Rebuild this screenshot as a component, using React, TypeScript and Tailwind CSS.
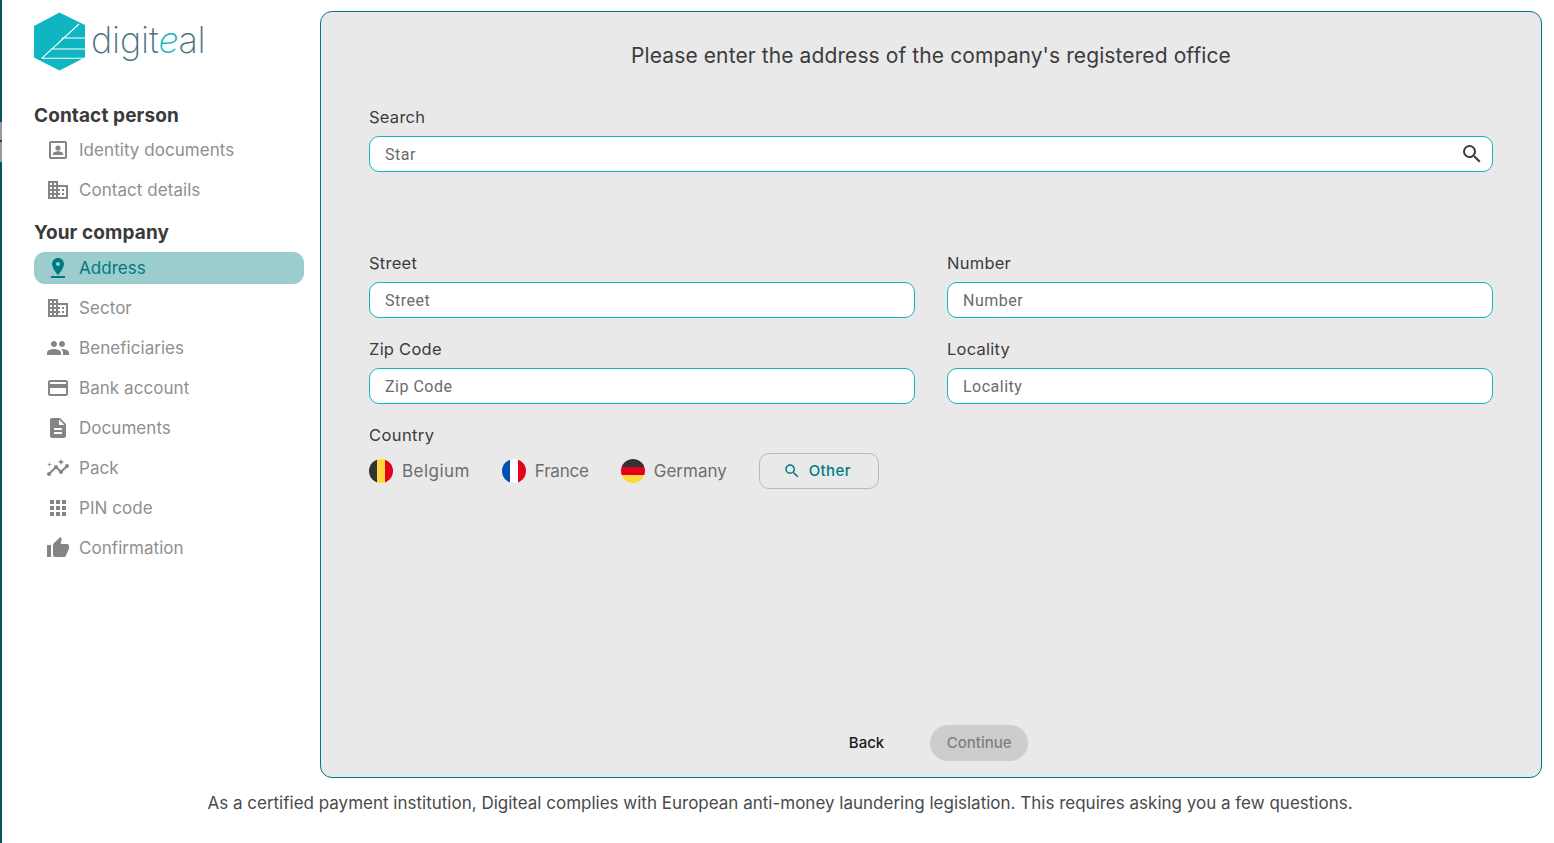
import { MdBusiness, MdPeople, MdCreditCard, MdDescription, MdInsights, MdApps, MdThumbUp, MdPinDrop, MdSearch } from "react-icons/md";

const sans = "font-['Inter','Noto_Sans',sans-serif]";

function Portrait() {
  return (
    <svg viewBox="0 0 24 24" width={24} height={24} fill="currentColor">
      <path d="M19 3H5c-1.11 0-2 .9-2 2v14c0 1.1.89 2 2 2h14c1.1 0 2-.9 2-2V5c0-1.1-.9-2-2-2zm0 16H5V5h14v14z" />
      <circle cx="12" cy="10" r="2.6" />
      <path d="M6.8 17v-.9c0-1.9 3.4-2.8 5.2-2.8s5.2.9 5.2 2.8v.9z" />
    </svg>
  );
}

function Logo() {
  return (
    <div className="flex items-center h-[60px]">
      <svg viewBox="0 0 51 59" width={51} height={59} className="shrink-0">
        <polygon points="25.5,0.5 51,13 51,45.5 25.5,58.5 0,45.5 0,14" fill="#10b5c2" />
        <path d="M7.7 46.3 L45 12 M27.7 26 H52 M16.7 37 H52 M7.7 46.3 H52" stroke="#fff" strokeWidth="1.1" fill="none" />
      </svg>
      <span className="ml-[6px] -mt-[2px] font-['Inter',sans-serif] text-[36px] font-extralight text-[#4e7482] leading-none tracking-[-0.2px]">
        digit<span className="text-[#10b5c2] italic">e</span>al
      </span>
    </div>
  );
}

function NavItem({ icon, label, active }: { icon: React.ReactNode; label: string; active?: boolean }) {
  return (
    <div className={`flex items-center h-8 mb-2 rounded-[11px] ${active ? "bg-[#9bcdcf] text-[#007a80]" : "text-[#8f8f8f]"}`}>
      <span className={`w-[45px] flex justify-center text-2xl pl-[3px] ${active ? "text-[#007a80]" : "text-[#858585]"}`}>{icon}</span>
      <span className="text-[17px] tracking-[0.05px] leading-none">{label}</span>
    </div>
  );
}

function Field({ label, placeholder, value }: { label: string; placeholder?: string; value?: string }) {
  return (
    <div className="flex-1 min-w-0">
      <div className="text-[16.5px] text-[#3c3c3c] leading-5 mb-[9px] tracking-[0.25px]">{label}</div>
      <div className="h-9 rounded-[10px] border border-[#10b5c2] bg-white flex items-center pl-[15px] pr-4 pt-[1px] font-['Roboto',sans-serif] text-base tracking-[0.5px] text-[#6b6b6b]">
        {value ?? placeholder}
      </div>
    </div>
  );
}

function Flag({ kind }: { kind: "be" | "fr" | "de" }) {
  const c = { be: ["#333333", "#ffd83d", "#e3001b"], fr: ["#0050b5", "#ffffff", "#e3001b"], de: ["#333333", "#e3001b", "#ffd83d"] }[kind];
  const vertical = kind !== "de";
  return (
    <div className={`w-6 h-6 rounded-full overflow-hidden flex shrink-0 ${vertical ? "flex-row" : "flex-col"}`}>
      {c.map((col, i) => (
        <div key={i} className="flex-1" style={{ background: col }} />
      ))}
    </div>
  );
}

function Country({ kind, label, track }: { kind: "be" | "fr" | "de"; label: string; track: string }) {
  return (
    <div className="flex items-center gap-[9px] mr-8">
      <Flag kind={kind} />
      <span className={`text-[17px] text-[#6e6e6e] leading-none ${track}`}>{label}</span>
    </div>
  );
}

export default function App() {
  return (
    <div className={`${sans} relative h-[843px] w-[1554px] overflow-hidden bg-white flex flex-col`}>
      <div className="flex">
        <div className="w-[2px] h-[778px] shrink-0 flex flex-col bg-[#00565b]">
          <div className="h-[122px]" />
          <div className="h-[18px] bg-[#9a9a9a]" />
          <div className="h-[2px]" />
          <div className="h-[20px] bg-[#9a9a9a]" />
        </div>
        <aside className="w-[318px] shrink-0 pl-8 pr-4">
          <div className="mt-[11px] mb-[33px]"><Logo /></div>
          <div className="text-[19px] font-bold text-[#3a3a3a] leading-6 mb-[6px] tracking-[0.1px]">Contact person</div>
          <NavItem icon={<Portrait />} label="Identity documents" />
          <NavItem icon={<MdBusiness />} label="Contact details" />
          <div className="text-[19px] font-bold text-[#3a3a3a] leading-6 mt-[15px] mb-[7px] tracking-[0.1px]">Your company</div>
          <NavItem active icon={<MdPinDrop />} label="Address" />
          <NavItem icon={<MdBusiness />} label="Sector" />
          <NavItem icon={<MdPeople />} label="Beneficiaries" />
          <NavItem icon={<MdCreditCard />} label="Bank account" />
          <NavItem icon={<MdDescription />} label="Documents" />
          <NavItem icon={<MdInsights />} label="Pack" />
          <NavItem icon={<MdApps />} label="PIN code" />
          <NavItem icon={<MdThumbUp />} label="Confirmation" />
        </aside>
        <div className="w-[1222px] shrink-0 pt-[11px]">
          <main className="h-[767px] rounded-[12px] border border-[#007a80] bg-[#e9e9e9] px-12 pt-[30px] flex flex-col">
            <h1 className="text-[21px] text-[#3c3c3c] text-center leading-7 font-normal tracking-[0.1px]">Please enter the address of the company's registered office</h1>
            <div className="mt-[37px] relative">
              <Field label="Search" value="Star" />
              <MdSearch className="absolute right-[9px] bottom-[6px] text-2xl text-[#3c3c3c]" />
            </div>
            <div className="mt-[81px] flex gap-8">
              <Field label="Street" placeholder="Street" />
              <Field label="Number" placeholder="Number" />
            </div>
            <div className="mt-[21px] flex gap-8">
              <Field label="Zip Code" placeholder="Zip Code" />
              <Field label="Locality" placeholder="Locality" />
            </div>
            <div className="mt-[21px] text-[16.5px] text-[#3c3c3c] leading-5 tracking-[0.4px]">Country</div>
            <div className="mt-[8px] flex items-center">
              <Country kind="be" label="Belgium" track="tracking-[0.45px]" />
              <Country kind="fr" label="France" track="tracking-[-0.2px]" />
              <Country kind="de" label="Germany" track="tracking-[0px]" />
              <div className="w-[120px] h-9 pr-1 rounded-[10px] border border-[#b9b9b9] flex items-center justify-center gap-2 text-[#007a80] text-[15px] font-medium tracking-[0.4px]">
                <MdSearch className="text-lg" />
                Other
              </div>
            </div>
            <div className="mt-auto mb-[16px] flex items-center justify-center pl-[15px]">
              <span className="text-[15px] font-medium text-[#1a1a1a] mr-[46px]">Back</span>
              <div className="h-9 w-[98px] rounded-full bg-[#cdcdcd] text-[#808080] text-[15px] font-medium flex items-center justify-center">Continue</div>
            </div>
          </main>
        </div>
      </div>
      <div className="flex-1 flex">
        <div className="w-[2px] bg-[#00565b] shrink-0" />
        <p className="flex-1 mt-[15px] text-center text-[17px] text-[#4a4a4a] leading-5 pl-[4px]">
          As a certified payment institution, Digiteal complies with European anti-money laundering legislation. This requires asking you a few questions.
        </p>
      </div>
    </div>
  );
}
